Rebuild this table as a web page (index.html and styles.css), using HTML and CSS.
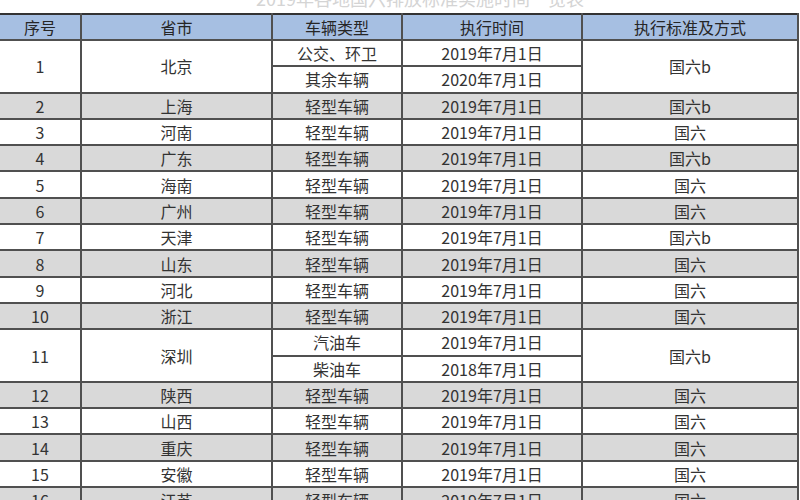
FILE: index.html
```html
<!DOCTYPE html>
<html lang="zh-CN">
<head>
<meta charset="utf-8">
<title>国六排放标准实施时间</title>
<link rel="stylesheet" href="styles.css">
</head>
<body>
<div class="title"><span>2019年各地国六排放标准实施时间一览表</span></div>
<table class="grid">
  <colgroup>
    <col class="c-no">
    <col class="c-city">
    <col class="c-type">
    <col class="c-date">
    <col class="c-std">
  </colgroup>
  <thead>
    <tr class="head">
      <th>序号</th><th>省市</th><th>车辆类型</th><th>执行时间</th><th>执行标准及方式</th>
    </tr>
  </thead>
  <tbody>
    <tr class="white"><td rowspan="2">1</td><td rowspan="2">北京</td><td>公交、环卫</td><td>2019年7月1日</td><td rowspan="2">国六b</td></tr>
    <tr class="white"><td>其余车辆</td><td>2020年7月1日</td></tr>
    <tr class="gray"><td>2</td><td>上海</td><td>轻型车辆</td><td>2019年7月1日</td><td>国六b</td></tr>
    <tr class="white"><td>3</td><td>河南</td><td>轻型车辆</td><td>2019年7月1日</td><td>国六</td></tr>
    <tr class="gray"><td>4</td><td>广东</td><td>轻型车辆</td><td>2019年7月1日</td><td>国六b</td></tr>
    <tr class="white"><td>5</td><td>海南</td><td>轻型车辆</td><td>2019年7月1日</td><td>国六</td></tr>
    <tr class="gray"><td>6</td><td>广州</td><td>轻型车辆</td><td>2019年7月1日</td><td>国六</td></tr>
    <tr class="white"><td>7</td><td>天津</td><td>轻型车辆</td><td>2019年7月1日</td><td>国六b</td></tr>
    <tr class="gray"><td>8</td><td>山东</td><td>轻型车辆</td><td>2019年7月1日</td><td>国六</td></tr>
    <tr class="white"><td>9</td><td>河北</td><td>轻型车辆</td><td>2019年7月1日</td><td>国六</td></tr>
    <tr class="gray"><td>10</td><td>浙江</td><td>轻型车辆</td><td>2019年7月1日</td><td>国六</td></tr>
    <tr class="white"><td rowspan="2">11</td><td rowspan="2">深圳</td><td>汽油车</td><td>2019年7月1日</td><td rowspan="2">国六b</td></tr>
    <tr class="white"><td>柴油车</td><td>2018年7月1日</td></tr>
    <tr class="gray"><td>12</td><td>陕西</td><td>轻型车辆</td><td>2019年7月1日</td><td>国六</td></tr>
    <tr class="white"><td>13</td><td>山西</td><td>轻型车辆</td><td>2019年7月1日</td><td>国六</td></tr>
    <tr class="gray"><td>14</td><td>重庆</td><td>轻型车辆</td><td>2019年7月1日</td><td>国六</td></tr>
    <tr class="white"><td>15</td><td>安徽</td><td>轻型车辆</td><td>2019年7月1日</td><td>国六</td></tr>
    <tr class="gray"><td>16</td><td>江苏</td><td>轻型车辆</td><td>2019年7月1日</td><td>国六</td></tr>
  </tbody>
</table>
</body>
</html>
```

FILE: styles.css
```css
html, body {
  margin: 0;
  padding: 0;
  background: #ffffff;
  overflow: hidden;
}
body {
  width: 800px;
  height: 500px;
  font-family: "Noto Sans CJK SC", "Noto Sans", sans-serif;
  color: #333333;
}
.title {
  height: 13px;
  overflow: hidden;
  display: flex;
  align-items: flex-start;
  justify-content: center;
}
.title span {
  font-size: 18px;
  line-height: 18px;
  margin-top: -11px;
  color: #d4d4d4;
  padding-left: 40px;
}
.grid {
  border-collapse: collapse;
  table-layout: fixed;
  width: 798px;
  font-size: 16px;
}
.c-no { width: 81px; }
.c-city { width: 191px; }
.c-type { width: 130px; }
.c-date { width: 180px; }
.c-std { width: 216px; }
.grid th, .grid td {
  border: 2px solid #505050;
  padding: 0;
  text-align: center;
  vertical-align: middle;
  line-height: 20px;
  white-space: nowrap;
}
.grid tr > :first-child {
  border-left: none;
}
.head th {
  height: 24px;
  background: #a6bfe2;
  font-weight: normal;
  color: #262626;
  border-top: 2px solid #333333;
}
.grid tbody tr {
  height: 26.3px;
}
.white td {
  background: #ffffff;
}
.gray td {
  background: #d9d9d9;
}
```
